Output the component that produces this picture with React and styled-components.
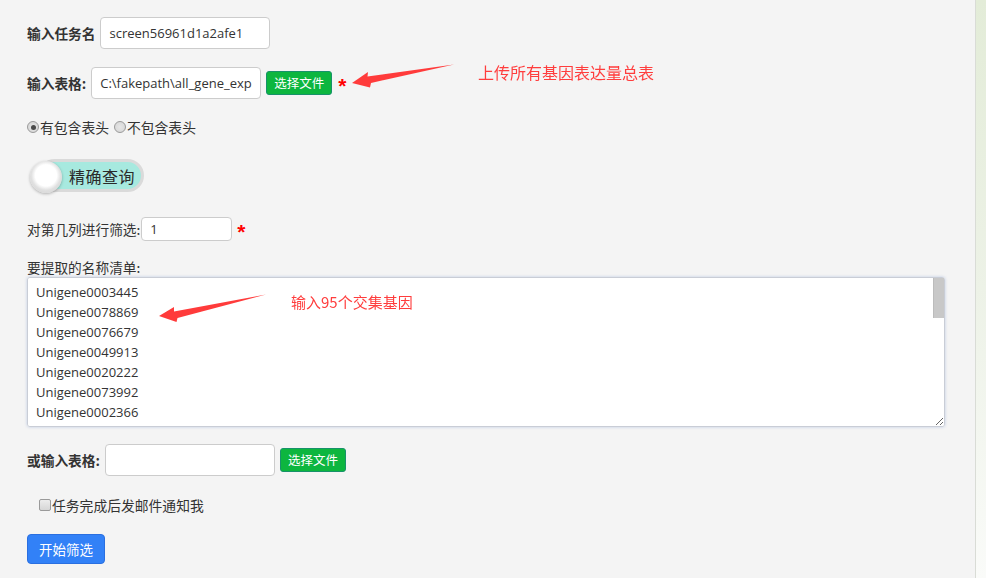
import React from "react";
import styled, { createGlobalStyle } from "styled-components";

const Global = createGlobalStyle`
  html, body { margin: 0; padding: 0; }
  body {
    background: #f4f4f4;
    font-family: "Open Sans", "Noto Sans CJK SC", sans-serif;
    color: #333;
  }
`;

const Page = styled.div`
  display: flex;
  width: 986px;
  height: 578px;
  overflow: hidden;
`;

const Main = styled.div`
  position: relative;
  flex: 0 0 975px;
  background: #f4f4f4;
  padding: 17px 0 0 27px;
  box-sizing: border-box;
  display: flex;
  flex-direction: column;
  align-items: flex-start;
`;

const SideStrip = styled.div`
  flex: 1;
  border-left: 1px solid #d9dcd6;
  background: linear-gradient(180deg, #e3ecd8 0%, #edf2e7 50%, #fafbf9 100%);
`;

const Row = styled.div`
  display: flex;
  align-items: center;
  margin-top: ${(p) => p.$mt || 0}px;
  margin-left: ${(p) => p.$ml || 0}px;
  gap: ${(p) => p.$gap ?? 5}px;
`;

const Label = styled.span`
  font-family: "Noto Sans CJK SC", sans-serif;
  font-size: 13.7px;
  font-weight: ${(p) => (p.$bold ? 700 : 400)};
  color: #333;
  line-height: 18px;
  white-space: nowrap;
`;

const TextInput = styled.input`
  box-sizing: border-box;
  width: ${(p) => p.$w || 170}px;
  height: ${(p) => p.$h || 32}px;
  border: 1px solid #ccc;
  border-radius: 4px;
  background: #fff;
  padding: 0 8px;
  font-family: "Open Sans", "Noto Sans CJK SC", sans-serif;
  font-size: 13px;
  color: #333;
  outline: none;
`;

const FileButton = styled.button`
  box-sizing: border-box;
  width: 66px;
  height: 24px;
  padding: 0;
  border: 1px solid #17926a;
  border-radius: 3px;
  background: #0db63f;
  color: #fff;
  font-family: "Noto Sans CJK SC", sans-serif;
  font-size: 12.5px;
  line-height: 22px;
  cursor: pointer;
`;

const Star = styled.span`
  color: #f00;
  font-family: "Liberation Sans", sans-serif;
  font-size: 21px;
  font-weight: 700;
  line-height: 18px;
  margin-left: ${(p) => p.$ml || 1}px;
  padding-top: 5px;
`;

const ChoiceRow = styled.label`
  display: inline-flex;
  align-items: center;
  margin-left: ${(p) => p.$ml || 0}px;
  font-family: "Noto Sans CJK SC", sans-serif;
  font-size: 13.8px;
  color: #333;
  line-height: 16px;
`;

const Radio = styled.span`
  box-sizing: border-box;
  width: 12px;
  height: 12px;
  border-radius: 50%;
  border: 1px solid #9a9a9a;
  background: radial-gradient(circle, #e6e6e6 0%, #d4d4d4 100%);
  display: inline-flex;
  align-items: center;
  justify-content: center;
  margin-right: 1px;
  &::after {
    content: "";
    width: 5px;
    height: 5px;
    border-radius: 50%;
    background: ${(p) => (p.$checked ? "#4a4a4a" : "transparent")};
  }
`;

const CheckBox = styled.span`
  box-sizing: border-box;
  width: 12px;
  height: 12px;
  border-radius: 2px;
  border: 1px solid #9a9a9a;
  background: linear-gradient(180deg, #ececec 0%, #d6d6d6 100%);
  margin-right: 1px;
`;

const Toggle = styled.div`
  position: relative;
  margin-top: 24px;
  margin-left: 3px;
  width: 114px;
  height: 34px;
`;

const Track = styled.div`
  box-sizing: border-box;
  position: absolute;
  left: 8px;
  right: 0;
  top: 0;
  height: 33px;
  border: 3px solid #dadada;
  border-radius: 17px;
  background: #a7e9df;
  display: flex;
  align-items: center;
  padding-left: 28px;
  font-family: "Noto Sans CJK SC", sans-serif;
  font-size: 16px;
  letter-spacing: 0.5px;
  color: #2a2a2a;
`;

const Knob = styled.div`
  position: absolute;
  left: 0;
  top: 2px;
  width: 32px;
  height: 32px;
  border-radius: 50%;
  background: radial-gradient(circle at 50% 45%, #ffffff 0%, #ffffff 45%, #e0e0e0 62%, #cbcbcb 100%);
  box-shadow: 0 1px 3px rgba(0, 0, 0, 0.28);
`;

const ListLabel = styled(Label)`
  margin-top: 17px;
`;

const ListBox = styled.div`
  position: relative;
  margin-top: 1px;
  width: 918px;
  height: 150px;
`;

const ListArea = styled.textarea`
  display: block;
  box-sizing: border-box;
  width: 918px;
  height: 150px;
  margin: 0;
  border: 1px solid #c9cdd6;
  border-radius: 3px;
  box-shadow: 0 0 3px rgba(120, 150, 210, 0.45);
  background: #fff;
  padding: 4px 20px 4px 8px;
  font-family: "Open Sans", sans-serif;
  font-size: 13px;
  line-height: 20px;
  color: #333;
  outline: none;
  resize: both;
  overflow-y: scroll;
  scrollbar-width: none;
`;

const ScrollThumb = styled.div`
  position: absolute;
  right: 1px;
  top: 1px;
  width: 11px;
  height: 40px;
  background: #c8c8c8;
  border-left: 1px solid #bcbcbc;
  box-sizing: border-box;
`;

const SubmitButton = styled.button`
  box-sizing: border-box;
  margin-top: 21px;
  width: 78px;
  height: 30px;
  border: 1px solid #2a6fe0;
  border-radius: 4px;
  background: #3281f7;
  color: #fff;
  font-family: "Noto Sans CJK SC", sans-serif;
  font-size: 13.5px;
  padding: 0;
  cursor: pointer;
`;

const Overlay = styled.svg`
  position: absolute;
  left: 0;
  top: 0;
  pointer-events: none;
`;

const Note = styled.span`
  position: absolute;
  left: ${(p) => p.$x}px;
  top: ${(p) => p.$y}px;
  font-family: "Noto Sans CJK SC", sans-serif;
  font-size: ${(p) => p.$size || 16}px;
  color: #ff3d3d;
  line-height: 20px;
  white-space: nowrap;
`;

const genes = [
  "Unigene0003445", "Unigene0078869", "Unigene0076679", "Unigene0049913",
  "Unigene0020222", "Unigene0073992", "Unigene0002366", "Unigene0051287",
  "Unigene0034710", "Unigene0066153", "Unigene0012894", "Unigene0080437",
  "Unigene0027619", "Unigene0045502", "Unigene0069921", "Unigene0008734",
  "Unigene0059146", "Unigene0031478", "Unigene0074205", "Unigene0016633",
  "Unigene0042817", "Unigene0063390", "Unigene0005921", "Unigene0038846",
  "Unigene0071152", "Unigene0024583", "Unigene0057709",
];

export default function App() {
  return (
    <>
      <Global />
      <Page>
        <Main>
          <Row $gap={5}>
            <Label $bold>输入任务名</Label>
            <TextInput defaultValue="screen56961d1a2afe1" />
          </Row>
          <Row $mt={18} $gap={5}>
            <Label $bold>输入表格:</Label>
            <TextInput defaultValue="C:\fakepath\all_gene_expression.xls" />
            <FileButton>选择文件</FileButton>
            <Star>*</Star>
          </Row>
          <Row $mt={20} $gap={0}>
            <ChoiceRow>
              <Radio $checked />有包含表头
            </ChoiceRow>
            <ChoiceRow $ml={5}>
              <Radio />不包含表头
            </ChoiceRow>
          </Row>
          <Toggle>
            <Track>精确查询</Track>
            <Knob />
          </Toggle>
          <Row $mt={24} $gap={1}>
            <Label>对第几列进行筛选:</Label>
            <TextInput $w={91} $h={24} defaultValue="1" />
            <Star $ml={4}>*</Star>
          </Row>
          <ListLabel>要提取的名称清单:</ListLabel>
          <ListBox>
            <ListArea defaultValue={genes.join("\n")} spellCheck={false} />
            <ScrollThumb />
          </ListBox>
          <Row $mt={17} $gap={5}>
            <Label $bold>或输入表格:</Label>
            <TextInput />
            <FileButton>选择文件</FileButton>
          </Row>
          <Row $mt={21} $ml={12} $gap={0}>
            <ChoiceRow>
              <CheckBox />任务完成后发邮件通知我
            </ChoiceRow>
          </Row>
          <SubmitButton>开始筛选</SubmitButton>

          <Overlay width="975" height="578">
            <polygon
              points="352,83 368,72 367.5,76.5 454,64.5 371,83 370,87.5"
              fill="#ff3b3b"
            />
            <polygon
              points="159,316 174,307 174,311.5 266,294.5 177.5,318 176.5,322"
              fill="#ff3b3b"
            />
          </Overlay>
          <Note $x={478} $y={62}>上传所有基因表达量总表</Note>
          <Note $x={291} $y={292} $size={15}>输入95个交集基因</Note>
        </Main>
        <SideStrip />
      </Page>
    </>
  );
}
